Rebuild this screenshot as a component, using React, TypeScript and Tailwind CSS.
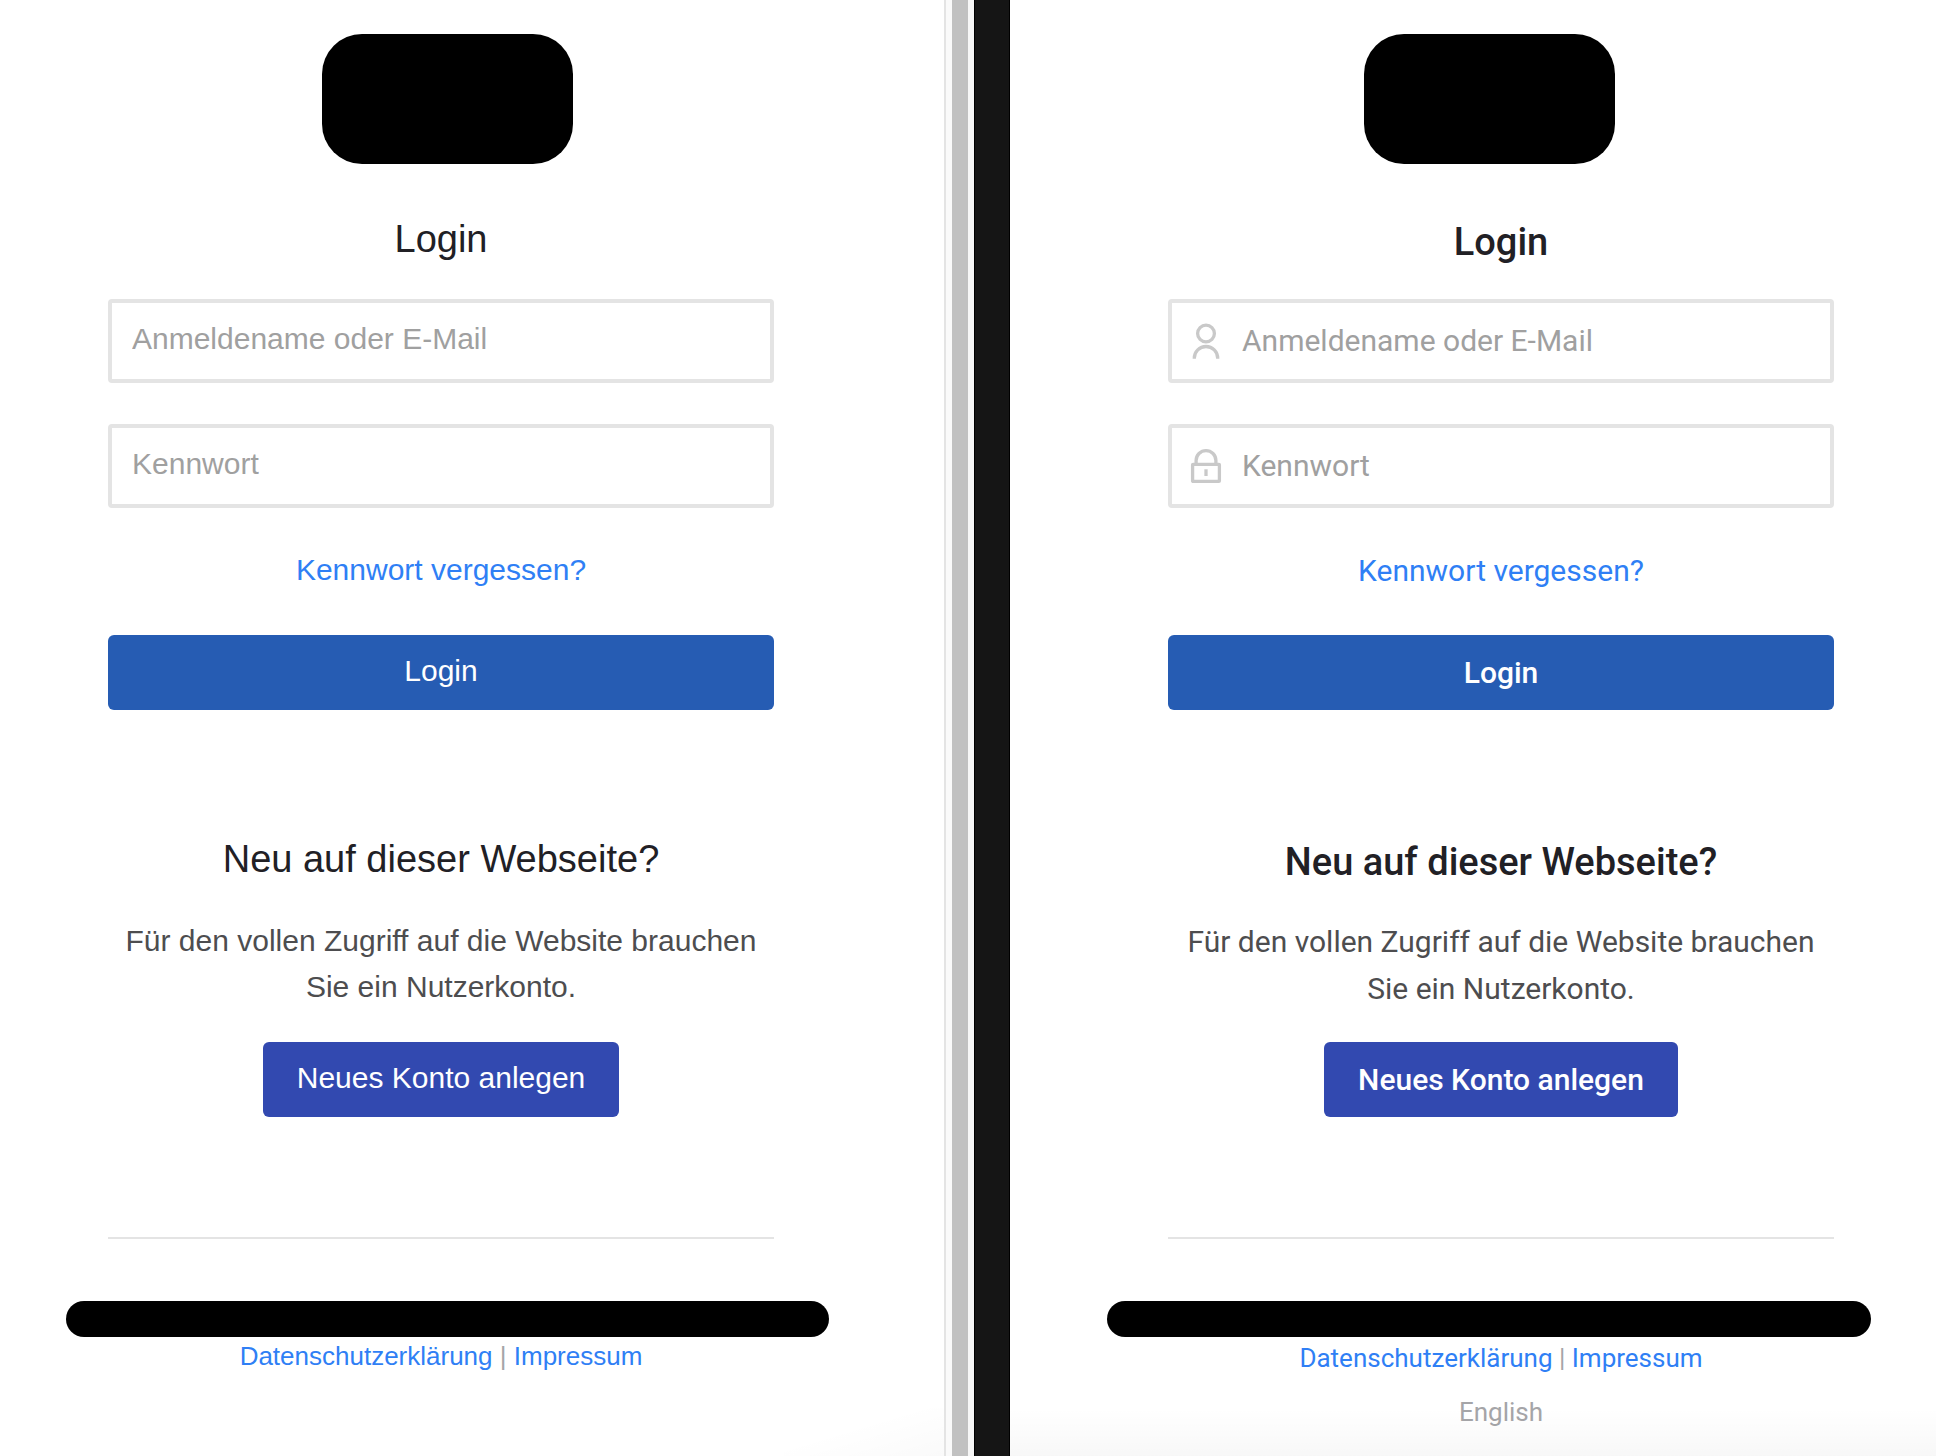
import type { ReactNode } from "react";
import { clsx } from "clsx";

interface LoginPanelProps {
  variant: "plain" | "branded";
}

// Both panels share one layout, only font, weight and side gutters differ.
const themes = {
  plain: {
    main: "font-['Liberation_Sans',sans-serif] pl-[66px] pr-[115px]",
    content: "pl-[42px] pr-[55px]",
    title: "h-12 leading-[42px]",
    text: "leading-[46px]",
    button: "pb-1",
    input: "px-5 pb-1",
    footer: "h-10 leading-[36px]",
  },
  branded: {
    main: "font-[Roboto,sans-serif] pl-[97px] pr-[65px]",
    content: "pl-[61px] pr-[37px]",
    title: "h-12 leading-[48px] font-medium",
    text: "leading-[47px]",
    button: "font-medium",
    input: "pl-[70px] pr-5 pb-0.5",
    footer: "h-10 leading-[40px]",
  },
};

function UserIcon() {
  return (
    <svg viewBox="0 0 32 40" className="h-10 w-8" fill="none" stroke="currentColor" strokeWidth="3.3">
      <circle cx="16" cy="12.5" r="8.4" />
      <path d="M4.3 37.8v-.6a11.7 11.7 0 0 1 23.4 0v.6" />
    </svg>
  );
}

function LockIcon() {
  return (
    <svg viewBox="0 0 32 40" className="h-10 w-8" fill="none" stroke="currentColor" strokeWidth="3.3">
      <path d="M6.1 18v-3.5a9.9 9.9 0 0 1 19.8 0V18" />
      <rect x="2.6" y="18.3" width="26.8" height="17.1" rx="0.5" />
      <path d="M16 23.3v6.7" />
    </svg>
  );
}

interface FieldProps {
  label: string;
  type: string;
  className: string;
  icon?: ReactNode;
}

function Field({ label, type, className, icon }: FieldProps) {
  return (
    <div className="relative">
      {icon && (
        <span className="pointer-events-none absolute inset-y-0 left-[22px] flex items-center text-[#c9c9c9]">
          {icon}
        </span>
      )}
      <input
        type={type}
        aria-label={label}
        placeholder={label}
        className={clsx(
          "block h-[84px] w-full rounded-[4px] border-4 border-[#e4e4e4] text-[30px] text-[#4d4d4f] outline-none placeholder:text-[#a0a0a0] focus:border-[#2f7ff5]",
          className
        )}
      />
    </div>
  );
}

function LoginPanel({ variant }: LoginPanelProps) {
  const theme = themes[variant];
  const branded = variant === "branded";

  return (
    <main className={clsx("relative flex min-w-0 flex-col pt-[34px] text-center", theme.main)}>
      <div className="h-[130px] w-[251px] self-center rounded-[40px] bg-black" />

      <div className={theme.content}>
        <form onSubmit={(e) => e.preventDefault()}>
          <h1 className={clsx("mt-[54px] text-[38px] text-[#212025]", theme.title)}>Login</h1>
          <div className="mt-[33px] flex flex-col gap-[41px]">
            <Field
              label="Anmeldename oder E-Mail"
              type="text"
              className={theme.input}
              icon={branded && <UserIcon />}
            />
            <Field
              label="Kennwort"
              type="password"
              className={theme.input}
              icon={branded && <LockIcon />}
            />
          </div>
          <p className="mt-[39px] h-12 text-[30px]">
            <a href="#kennwort" className={clsx("text-[#2f7ff5]", theme.text)}>
              Kennwort vergessen?
            </a>
          </p>
          <button
            type="submit"
            className={clsx(
              "mt-10 flex h-[75px] w-full items-center justify-center rounded-[6px] bg-[#265cb3] text-[30px] text-white",
              theme.button
            )}
          >
            Login
          </button>
        </form>

        <section className="flex flex-col items-center">
          <h2 className={clsx("mt-32 text-[38px] text-[#212025]", theme.title)}>
            Neu auf dieser Webseite?
          </h2>
          <p className={clsx("mt-8 h-[94px] text-[30px] text-[#4d4d4f]", theme.text)}>
            Für den vollen Zugriff auf die Website brauchen Sie ein Nutzerkonto.
          </p>
          <button
            type="button"
            className={clsx(
              "mt-[30px] flex h-[75px] items-center rounded-[6px] bg-[#3249b0] px-[34px] text-[30px] text-white",
              theme.button
            )}
          >
            Neues Konto anlegen
          </button>
        </section>

        <hr className="mt-[120px] border-t-2 border-[#e4e4e4]" />
      </div>

      <div className="mt-[62px] h-9 rounded-full bg-black" />

      <footer className={clsx("text-[26px] text-[#a5a5a8]", theme.content)}>
        <p className={clsx("mt-px", theme.footer)}>
          <a href="#datenschutz" className="text-[#2f7ff5]">
            Datenschutzerklärung
          </a>{" "}
          |{" "}
          <a href="#impressum" className="text-[#2f7ff5]">
            Impressum
          </a>
        </p>
        {branded && (
          <p className={clsx("mt-3.5", theme.footer)}>
            <a href="#en">English</a>
          </p>
        )}
      </footer>

      <div
        className={clsx(
          "pointer-events-none absolute bottom-0 right-0 h-12",
          branded
            ? "left-0 bg-linear-to-b from-transparent to-black/3"
            : "w-40 bg-linear-to-br from-transparent from-40% to-black/2"
        )}
      />
    </main>
  );
}

export default function App() {
  return (
    <div className="grid min-h-screen grid-cols-[944fr_auto_926fr] bg-white">
      <LoginPanel variant="plain" />
      <div className="flex">
        <div className="w-2 border-l-2 border-[#e4e4e4] bg-[#fafafa]" />
        <div className="w-4 bg-[#c1c1c1]" />
        <div className="w-1.5 bg-[#f7f7f7]" />
        <div className="w-9 border-x border-black bg-[#151515]" />
      </div>
      <LoginPanel variant="branded" />
    </div>
  );
}
